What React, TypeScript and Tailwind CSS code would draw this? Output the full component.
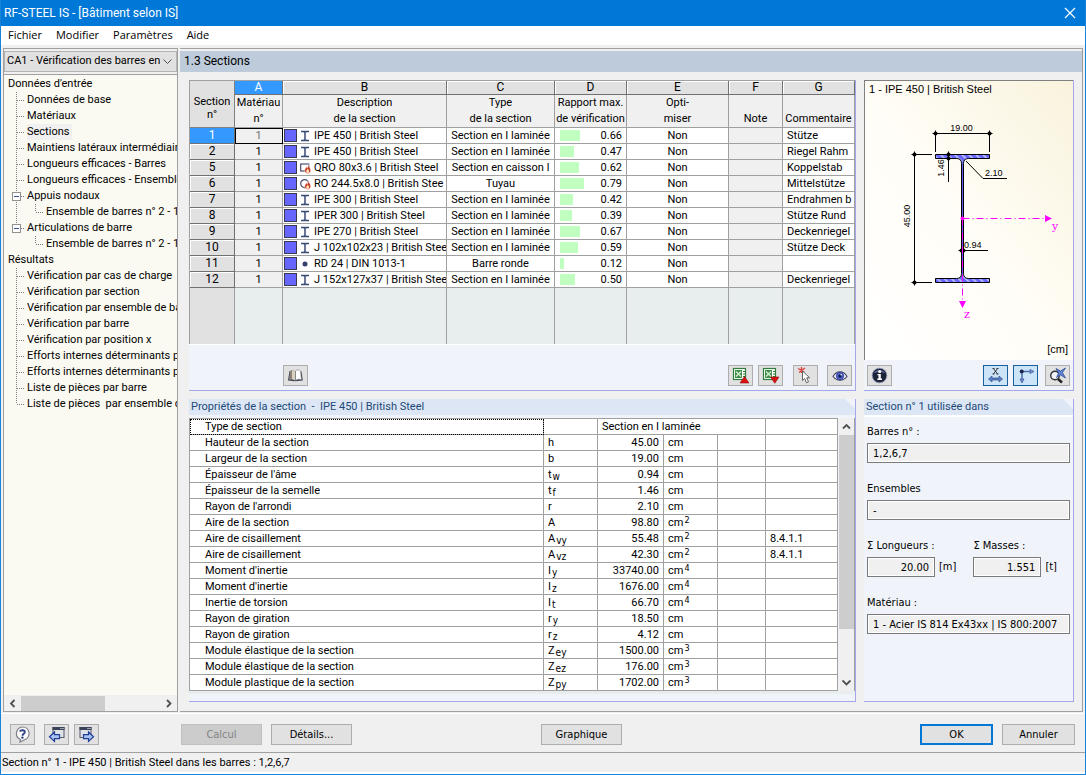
import React from "react";

const TAHOMA = "font-[Roboto,'Liberation_Sans',sans-serif]";
const ARIAL = "font-[Roboto,'Liberation_Sans',Arial,sans-serif]";
const WIDE = "font-['DejaVu_Sans_Condensed','DejaVu_Sans',sans-serif]";
const SEGOE = "font-['Open_Sans','Noto_Sans',sans-serif]";

/* ---------- data ---------- */

type Shape = "i" | "box" | "pipe" | "dot";

type SectionRow = {
  no: string;
  shape: Shape;
  name: string;
  type: string;
  ratio: number;
  comment: string;
};

const I_TYPE = "Section en I laminée";

const SECTIONS: SectionRow[] = [
  { no: "1", shape: "i", name: "IPE 450 | British Steel", type: I_TYPE, ratio: 0.66, comment: "Stütze" },
  { no: "2", shape: "i", name: "IPE 450 | British Steel", type: I_TYPE, ratio: 0.47, comment: "Riegel Rahm" },
  { no: "5", shape: "box", name: "QRO 80x3.6 | British Steel", type: "Section en caisson l", ratio: 0.62, comment: "Koppelstab" },
  { no: "6", shape: "pipe", name: "RO 244.5x8.0 | British Stee", type: "Tuyau", ratio: 0.79, comment: "Mittelstütze" },
  { no: "7", shape: "i", name: "IPE 300 | British Steel", type: I_TYPE, ratio: 0.42, comment: "Endrahmen b" },
  { no: "8", shape: "i", name: "IPER 300 | British Steel", type: I_TYPE, ratio: 0.39, comment: "Stütze Rund" },
  { no: "9", shape: "i", name: "IPE 270 | British Steel", type: I_TYPE, ratio: 0.67, comment: "Deckenriegel" },
  { no: "10", shape: "i", name: "J 102x102x23 | British Stee", type: I_TYPE, ratio: 0.59, comment: "Stütze Deck" },
  { no: "11", shape: "dot", name: "RD 24 | DIN 1013-1", type: "Barre ronde", ratio: 0.12, comment: "" },
  { no: "12", shape: "i", name: "J 152x127x37 | British Stee", type: I_TYPE, ratio: 0.5, comment: "Deckenriegel" },
];

type Property = {
  label: string;
  sym: string;
  sub?: string;
  value: string;
  exp?: string;
  clause?: string;
};

const PROPERTIES: Property[] = [
  { label: "Hauteur de la section", sym: "h", value: "45.00" },
  { label: "Largeur de la section", sym: "b", value: "19.00" },
  { label: "Épaisseur de l'âme", sym: "t", sub: "w", value: "0.94" },
  { label: "Épaisseur de la semelle", sym: "t", sub: "f", value: "1.46" },
  { label: "Rayon de l'arrondi", sym: "r", value: "2.10" },
  { label: "Aire de la section", sym: "A", value: "98.80", exp: "2" },
  { label: "Aire de cisaillement", sym: "A", sub: "vy", value: "55.48", exp: "2", clause: "8.4.1.1" },
  { label: "Aire de cisaillement", sym: "A", sub: "vz", value: "42.30", exp: "2", clause: "8.4.1.1" },
  { label: "Moment d'inertie", sym: "I", sub: "y", value: "33740.00", exp: "4" },
  { label: "Moment d'inertie", sym: "I", sub: "z", value: "1676.00", exp: "4" },
  { label: "Inertie de torsion", sym: "I", sub: "t", value: "66.70", exp: "4" },
  { label: "Rayon de giration", sym: "r", sub: "y", value: "18.50" },
  { label: "Rayon de giration", sym: "r", sub: "z", value: "4.12" },
  { label: "Module élastique de la section", sym: "Z", sub: "ey", value: "1500.00", exp: "3" },
  { label: "Module élastique de la section", sym: "Z", sub: "ez", value: "176.00", exp: "3" },
  { label: "Module plastique de la section", sym: "Z", sub: "py", value: "1702.00", exp: "3" },
];

type Node = { label: string; selected?: boolean; child?: string };

const INPUT_NODES: Node[] = [
  { label: "Données de base" },
  { label: "Matériaux" },
  { label: "Sections", selected: true },
  { label: "Maintiens latéraux intermédiaire" },
  { label: "Longueurs efficaces - Barres" },
  { label: "Longueurs efficaces - Ensemble" },
  { label: "Appuis nodaux", child: "Ensemble de barres n° 2 - 1" },
  { label: "Articulations de barre", child: "Ensemble de barres n° 2 - 1" },
];

const RESULT_NODES: Node[] = [
  { label: "Vérification par cas de charge" },
  { label: "Vérification par section" },
  { label: "Vérification par ensemble de ba" },
  { label: "Vérification par barre" },
  { label: "Vérification par position x" },
  { label: "Efforts internes déterminants p" },
  { label: "Efforts internes déterminants p" },
  { label: "Liste de pièces par barre" },
  { label: "Liste de pièces  par ensemble d" },
];

/* ---------- icons ---------- */

function ShapeIcon({ shape }: { shape: Shape }) {
  return (
    <svg width="11" height="12" viewBox="0 0 11 12" className="shrink-0">
      {shape === "i" && (
        <g stroke="#3b4a78" fill="none">
          <path d="M1 1.500h8M1 10.500h8M5 2v8" strokeWidth="1.500" />
          <path d="M3.500 2.500h3M3.500 9.500h3" strokeOpacity=".4" />
        </g>
      )}
      {shape === "dot" && <circle cx="5" cy="6" r="2.500" fill="#34406e" />}
      {shape === "box" && <rect x=".7" y="2" width="8" height="7" fill="none" stroke="#4a4f70" strokeWidth="1.200" />}
      {shape === "pipe" && <circle cx="4.700" cy="5.600" r="4" fill="none" stroke="#4a4f70" strokeWidth="1.200" />}
      {(shape === "box" || shape === "pipe") && (
        <g>
          <path d="M8 2.200c.3 2 2.700 3.300 2.700 6 0 2-1.300 3.200-3 3.200S4.700 10.300 4.700 8.500c0-1.700 1.300-2.200 1.500-3.700C7 5 7.200 5.600 7.300 6 8 5 8.100 3.600 8 2.200z" fill="#c8402a" stroke="#fff" strokeWidth=".4" />
          <path d="M7.700 6.200c.2 1.300 1.400 1.600 1.400 3.200 0 .9-.6 1.500-1.400 1.500s-1.500-.5-1.500-1.500c0-1.200 1.300-1.600 1.500-3.200z" fill="#ffe2b8" />
        </g>
      )}
    </svg>
  );
}

function BookIcon() {
  return (
    <svg width="17" height="15" viewBox="0 0 17 15">
      <path d="M2.500 3 1 12.500l7 .8 7.800-.8L14.500 3.500z" fill="#3a4054" />
      <path d="M3 3C4.500 1.500 6.500 1.500 8 3v9.500c-2-1.200-4-1.400-6-.5z" fill="#8c8478" />
      <path d="M5 2.200v9c1 0 2 .3 3 1V3C7 2.200 6 2 5 2.200z" fill="#d9d0bd" />
      <path d="M8.500 3c1.500-1.500 3.700-1.500 5 0l1 8.700c-2-.8-4-.7-6 .8z" fill="#fff" stroke="#777" strokeWidth=".6" />
    </svg>
  );
}

function ExcelIcon({ down }: { down?: boolean }) {
  return (
    <svg width="18" height="17" viewBox="0 0 18 17">
      <rect x="1.500" y="1.500" width="12" height="11" fill="#fff" stroke="#2f7d3d" strokeWidth="1.200" />
      <rect x="3" y="3" width="7" height="8" fill="#3f8c4a" />
      <path d="m4 4.500 5 5M9 4.500l-5 5" stroke="#cfeecf" strokeWidth="1.400" />
      <path d="M11 4.500h2M11 7h2M11 9.500h2" stroke="#2f7d3d" />
      {down ? (
        <path d="M8.500 10h8.500l-4.200 6.300z" fill="#dd1111" stroke="#8e0b0b" strokeWidth=".6" />
      ) : (
        <path d="M8 16h9l-4.500-6.500z" fill="#dd1111" stroke="#8e0b0b" strokeWidth=".6" />
      )}
    </svg>
  );
}

function PickIcon() {
  return (
    <svg width="17" height="17" viewBox="0 0 17 17">
      <path d="M1 1.500 7.500 5M8 1 2 5.500M4.500 0v6" stroke="#d8453f" strokeWidth="1.400" />
      <path d="M5.500 4v9.500l2.200-2 1.800 4.300 2-.9L9.700 10.800h3z" fill="#fff" stroke="#555" strokeWidth=".9" />
    </svg>
  );
}

function EyeIcon() {
  return (
    <svg width="16" height="12" viewBox="0 0 16 12">
      <path d="M1 6.500C3 3 5.500 1.700 8 1.700S13 3 15 6.500c-2 2.500-4.500 3.800-7 3.800s-5-1.300-7-3.800z" fill="#eef0fb" stroke="#3a3f63" strokeWidth="1.100" />
      <circle cx="8" cy="6" r="3.700" fill="#4d63d8" stroke="#26306f" strokeWidth=".7" />
      <circle cx="8" cy="6" r="1.600" fill="#0d1333" />
      <circle cx="9.200" cy="4.800" r=".8" fill="#fff" />
    </svg>
  );
}

function InfoIcon() {
  return (
    <svg width="17" height="17" viewBox="0 0 17 17">
      <circle cx="8.500" cy="8.500" r="7.300" fill="#1c2238" stroke="#8a92b5" strokeWidth=".8" />
      <path d="M3 6c1.500-4 9.500-4 11 0-3-1-8-1-11 0z" fill="#5a648c" />
      <circle cx="8.700" cy="4.500" r="1.500" fill="#fff" />
      <path d="M6.500 7h3.300v4.500h1.200V13H6.300v-1.500h1.200V8.300h-1z" fill="#fff" />
    </svg>
  );
}

function DimensionIcon() {
  return (
    <svg width="17" height="17" viewBox="0 0 17 17">
      <path d="m6.500 1.500 4 5.500M10.500 1.500l-4 5.500M5.500 1.500h2M9.500 1.500h2M5.500 7h2M9.500 7h2" stroke="#222" strokeWidth=".9" fill="none" />
      <path d="m1.500 12 3.500-3v2h7V9l3.500 3-3.500 3v-2H5v2z" fill="#5b7fc4" stroke="#34508d" strokeWidth=".7" />
    </svg>
  );
}

function AxesIcon() {
  return (
    <svg width="18" height="17" viewBox="0 0 18 17">
      <path d="M5 4.500h9M5 4.500v9" stroke="#4668ad" strokeWidth="1.400" />
      <circle cx="4.700" cy="4.500" r="2" fill="#16224a" />
      <path d="m13 2.500 4 2-4 2zM3 12l2 4 2-4z" fill="#7d95c8" stroke="#3c5da5" strokeWidth=".8" />
    </svg>
  );
}

function ZoomResetIcon() {
  return (
    <svg width="18" height="17" viewBox="0 0 18 17">
      <circle cx="6" cy="8.500" r="4.300" fill="#f0f3f8" stroke="#333" strokeWidth="1.400" />
      <path d="m9 12 4 3.500" stroke="#222" strokeWidth="2.600" />
      <path d="M7 1.500 11.500 4 16.500 1 13.500 5.500 16.500 11 11.500 8 7.500 10.500 9.500 6z" fill="#5f82d4" stroke="#27438f" strokeWidth=".7" />
    </svg>
  );
}

function HelpIcon() {
  return (
    <svg width="19" height="17" viewBox="0 0 19 17">
      <path d="M9.500 1a6.500 6.500 0 0 1 2 12.700L7 16l.5-2.500A6.500 6.500 0 0 1 9.500 1z" fill="#fafafa" stroke="#7f7f88" strokeWidth="1.200" />
      <path d="M7 5.700c.3-2 4.800-2 4.800.4 0 1.700-2.200 1.700-2.300 3.600" fill="none" stroke="#2f4386" strokeWidth="1.900" />
      <circle cx="9.400" cy="11.600" r="1.200" fill="#2f4386" />
    </svg>
  );
}

function PageIcon({ next }: { next?: boolean }) {
  return (
    <svg width="19" height="17" viewBox="0 0 19 17">
      <g transform={next ? "translate(-1 0)" : "translate(2 0)"}>
        <rect x="4" y="1.500" width="11" height="10" fill="#dfe2e8" stroke="#555b6b" />
        <rect x="3.500" y="1" width="12" height="3" fill="#3a4256" />
        <path d="M11.500 2.500h1M13.500 2.500h1" stroke="#fff" />
      </g>
      {next ? (
        <path d="M6.500 8.700h5V6l5 4.700-5 4.700v-2.700h-5z" fill="#a9c2f2" stroke="#1f3f95" strokeWidth="1.200" />
      ) : (
        <path d="M12.500 8.700h-5V6l-5 4.700 5 4.700v-2.700h5z" fill="#a9c2f2" stroke="#1f3f95" strokeWidth="1.200" />
      )}
    </svg>
  );
}

/* ---------- small controls ---------- */

function IconButton({ label, active, children }: { label: string; active?: boolean; children: React.ReactNode }) {
  return (
    <button
      type="button"
      aria-label={label}
      className={
        "flex h-[21px] w-[25px] items-center justify-center border " +
        (active ? "border-[#1a5f9e] bg-[#cce4f7]" : "border-[#adadad] bg-[#e1e1e1]")
      }
    >
      {children}
    </button>
  );
}

function PushButton({ label, look, wide }: { label: string; look?: "default" | "disabled"; wide?: boolean }) {
  return (
    <button
      type="button"
      disabled={look === "disabled"}
      className={
        WIDE + " h-[21px] text-[11px] leading-[17px] " +
        (wide ? "w-[81px] " : "w-[73px] ") +
        (look === "default"
          ? "border-2 border-[#0078d7] bg-[#e1e1e1]"
          : look === "disabled"
            ? "border border-[#bfbfbf] bg-[#cccccc] text-[#838383]"
            : "border border-[#adadad] bg-[#e1e1e1]")
      }
    >
      {label}
    </button>
  );
}

function Chevron({ dir, thin }: { dir: "up" | "down" | "left" | "right"; thin?: boolean }) {
  const paths = {
    up: "M1 6.500 4.500 3 8 6.500",
    down: "M.5 2.500 4.500 6.500 8.500 2.500",
    left: "M6.500 1 3 4.500 6.500 8",
    right: "M3 1 6.500 4.500 3 8",
  };
  return (
    <svg width="9" height="9" viewBox="0 0 9 9" className="shrink-0">
      <path d={paths[dir]} fill="none" stroke="#505050" strokeWidth={thin ? "1" : "1.800"} />
    </svg>
  );
}

/* ---------- navigator ---------- */

function Guide({ last, plain }: { last?: boolean; plain?: boolean }) {
  return (
    <svg width="11" height="16" viewBox="0 0 11 16" className="shrink-0">
      <path d={last ? "M.5 0v8" : "M.5 0v16"} stroke="#808080" strokeDasharray="1 1" />
      {!plain && <path d="M1 8.500h8" stroke="#808080" strokeDasharray="1 1" />}
    </svg>
  );
}

function TreeBranch({ title, nodes }: { title: string; nodes: Node[] }) {
  return (
    <li>
      <button type="button" className="block h-4 pl-1 leading-4">
        {title}
      </button>
      <ul>
        {nodes.map((node, i) => {
          const last = i === nodes.length - 1;
          return (
            <li key={i}>
              <div className="flex h-4 items-center pl-3">
                {node.child ? (
                  <span className="relative flex">
                    <Guide last={last} />
                    <button
                      type="button"
                      aria-label={"Réduire " + node.label}
                      className="absolute top-1 -left-1 flex h-[9px] w-[9px] items-center justify-center border border-[#919191] bg-white"
                    >
                      <span className="h-px w-[5px] bg-[#3b4ea0]" />
                    </button>
                  </span>
                ) : (
                  <Guide last={last} />
                )}
                <button
                  type="button"
                  className={"h-4 shrink-0 whitespace-pre leading-4 " + (node.selected ? "bg-[#f0f0f0] pr-[3px]" : "")}
                >
                  {node.label}
                </button>
              </div>
              {node.child && (
                <ul>
                  <li className="flex h-4 items-center pl-3">
                    {last ? <span className="w-[11px] shrink-0" /> : <Guide plain />}
                    <span className="w-2 shrink-0" />
                    <Guide last />
                    <button type="button" className="h-4 shrink-0 whitespace-nowrap leading-4">
                      {node.child}
                    </button>
                  </li>
                </ul>
              )}
            </li>
          );
        })}
      </ul>
    </li>
  );
}

function Navigator() {
  return (
    <aside className="flex w-[175px] shrink-0 flex-col border border-[#a0a0a0] bg-[#f0f0f0]">
      <div className="relative mt-[2px] border border-[#b4b4b4] bg-[#e1e1e1]">
        <select
          aria-label="Cas d'application"
          className="block h-[19px] w-full appearance-none pr-4 pl-[2px] text-[11px] outline-none"
        >
          <option>CA1 - Vérification des barres en</option>
        </select>
        <span className="pointer-events-none absolute top-[5px] right-1">
          <Chevron dir="down" thin />
        </span>
      </div>
      <nav className="mt-[2px] flex-1 overflow-hidden border-t border-[#a0a0a0] bg-[#fbfaf2] pt-px">
        <ul>
          <TreeBranch title="Données d'entrée" nodes={INPUT_NODES} />
          <TreeBranch title="Résultats" nodes={RESULT_NODES} />
        </ul>
      </nav>
      <div className="flex h-4 items-center justify-between bg-[#f0f0f0] px-1">
        <Chevron dir="left" />
        <span className="ml-1 h-[15px] w-[84px] bg-[#cdcdcd]" />
        <span className="flex-1" />
        <Chevron dir="right" />
      </div>
    </aside>
  );
}

/* ---------- sections table ---------- */

const COLUMNS = [
  { letter: "A", lines: ["Matériau", "n°"] },
  { letter: "B", lines: ["Description", "de la section"] },
  { letter: "C", lines: ["Type", "de la section"] },
  { letter: "D", lines: ["Rapport max.", "de vérification"] },
  { letter: "E", lines: ["Opti-", "miser"] },
  { letter: "F", lines: ["Note"] },
  { letter: "G", lines: ["Commentaire"] },
];

function SectionsTable() {
  const cell = "overflow-hidden border-r border-b border-[#a0a0a0] whitespace-nowrap ";
  return (
    <table className={ARIAL + " w-full table-fixed border-separate border-spacing-0 border-t border-l border-[#a0a0a0] text-[11px] leading-[15px]"}>
      <colgroup>
        <col className="w-[45px]" />
        <col className="w-[48px]" />
        <col className="w-[164px]" />
        <col className="w-[108px]" />
        <col className="w-[72px]" />
        <col className="w-[102px]" />
        <col className="w-[54px]" />
        <col />
      </colgroup>
      <thead>
        <tr className="h-[14px]">
          <th rowSpan={2} className="border-r border-b border-[#808080] bg-[#e1e1e1] pt-2 leading-[13px] font-normal">
            Section
            <br />
            n°
          </th>
          {COLUMNS.map((c) => (
            <th
              key={c.letter}
              className={
                "border-r border-b border-[#707070] text-[12px] leading-[13px] font-normal " +
                (c.letter === "A" ? "bg-[#3399ff] text-white" : "bg-[#e1e1e1] shadow-[inset_1px_1px_0_#ffffff]")
              }
            >
              {c.letter}
            </th>
          ))}
        </tr>
        <tr className="h-[33px]">
          {COLUMNS.map((c) => (
            <th key={c.letter} className="border-r border-b border-[#a0a0a0] bg-[#f0f0f0] align-bottom leading-4 font-normal whitespace-nowrap">
              {c.lines.map((line) => (
                <span key={line} className="block">
                  {line}
                </span>
              ))}
            </th>
          ))}
        </tr>
      </thead>
      <tbody>
        {SECTIONS.map((row, i) => (
          <tr key={row.no} className="h-4 bg-white">
            <th
              scope="row"
              className={
                "border-r border-b border-[#707070] text-[12px] font-normal " +
                (i === 0 ? "bg-[#3399ff] text-white" : "bg-[#e1e1e1] shadow-[inset_1px_1px_0_#ffffff]")
              }
            >
              {row.no}
            </th>
            <td
              className={
                cell + "bg-[#f0f0f0] text-center " + (i === 0 ? "text-[#707070] outline outline-1 -outline-offset-1 outline-black" : "")
              }
            >
              1
            </td>
            <td className={cell}>
              <div className="flex items-center gap-[3px] pl-px">
                <span className="h-[13px] w-[13px] shrink-0 border border-[#3a3a50] bg-[#6666ff]" />
                <ShapeIcon shape={row.shape} />
                <span>{row.name}</span>
              </div>
            </td>
            <td className={cell + "text-center"}>{row.type}</td>
            <td className={cell}>
              <div className="flex items-center justify-between pr-1 pl-[5px]">
                <span className="h-[11px] bg-[#c0ffc0]" style={{ width: Math.round(row.ratio * 30) }} />
                <span>{row.ratio.toFixed(2)}</span>
              </div>
            </td>
            <td className={cell + "text-center"}>Non</td>
            <td className={cell + "bg-[#f0f0f0]"} />
            <td className={cell + "pl-1"}>{row.comment}</td>
          </tr>
        ))}
        <tr className="h-14">
          <td className="border-r border-[#a0a0a0] bg-[#e1e1e1]" />
          {COLUMNS.map((c) => (
            <td key={c.letter} className="border-r border-[#a0a0a0] bg-[#e8eeee]" />
          ))}
        </tr>
      </tbody>
    </table>
  );
}

/* ---------- properties table ---------- */

function PanelHeader({ children }: { children: React.ReactNode }) {
  return (
    <h2
      className={ARIAL + " h-4 bg-[#dce6f4] pl-[2px] text-[11px] leading-4 whitespace-pre text-[#1c4a78] [clip-path:polygon(0_0,calc(100%-10px)_0,100%_10px,100%_100%,0_100%)]"}
    >
      {children}
    </h2>
  );
}

function PropertiesTable() {
  const cell = "border-r border-b border-[#a0a0a0] whitespace-nowrap ";
  return (
    <table className={ARIAL + " min-w-0 flex-1 table-fixed border-separate border-spacing-0 border-t border-l border-[#a0a0a0] bg-white text-[11px] leading-[15px]"}>
      <colgroup>
        <col />
        <col className="w-[54px]" />
        <col className="w-[66px]" />
        <col className="w-[54px]" />
        <col className="w-12" />
        <col className="w-[72px]" />
      </colgroup>
      <tbody>
        <tr className="h-4">
          <td className={cell + "pl-[15px] outline outline-1 -outline-offset-1 outline-black outline-dotted"}>Type de section</td>
          <td className={cell} />
          <td colSpan={3} className={cell + "pl-1"}>
            {I_TYPE}
          </td>
          <td className={cell} />
        </tr>
        {PROPERTIES.map((p, i) => (
          <tr key={i} className="h-4">
            <td className={cell + "pl-[15px]"}>{p.label}</td>
            <td className={cell + "pl-1"}>
              {p.sym}
              {p.sub && <sub className={WIDE + " -bottom-[2px] pl-px text-[10px]"}>{p.sub}</sub>}
            </td>
            <td className={cell + "pr-1 text-right"}>{p.value}</td>
            <td className={cell + "pl-1"}>
              cm{p.exp && <sup className={WIDE + " -top-[3px] pl-px text-[9px]"}>{p.exp}</sup>}
            </td>
            <td className={cell} />
            <td className={cell + "pl-1"}>{p.clause}</td>
          </tr>
        ))}
      </tbody>
    </table>
  );
}

/* ---------- profile drawing ---------- */

function Mark({ x, y }: { x: number; y: number }) {
  return (
    <g>
      <circle cx={x} cy={y} r="2" fill="#000" />
      <path d={`M${x - 3} ${y}h6M${x} ${y - 3}v6`} stroke="#000" />
    </g>
  );
}

function ProfileDrawing() {
  return (
    <svg width="208" height="240" viewBox="865 101 208 240" className="mx-auto block">
      <defs>
        <pattern id="hatch" width="5" height="5" patternUnits="userSpaceOnUse" patternTransform="rotate(-45)">
          <rect width="5" height="5" fill="#6666ff" />
          <rect width="1.500" height="5" fill="#c8c8ff" />
        </pattern>
      </defs>
      <path
        d="M935.500 154.500h54v4h-21q-5 0-5 5v110q0 5 5 5h21v4h-54v-4h21q5 0 5-5v-110q0-5-5-5h-21z"
        fill="url(#hatch)"
        stroke="#000"
      />
      <path d="M962.500 162v112" stroke="#5a5ae6" />
      <g stroke="#000" fill="none">
        <path d="M933 133.500h59M935.500 133v19M989.500 133v19" />
        <path d="M914.500 154v129M914 154.500h18M914 282.500h18" />
        <path d="M948.500 154v28" />
        <path d="M966 161l17 17.500h24" />
        <path d="M960 250.500h28" />
      </g>
      <Mark x={935.5} y={133.5} />
      <Mark x={989.5} y={133.5} />
      <Mark x={914.5} y={154.5} />
      <Mark x={914.5} y={282.5} />
      <Mark x={948.5} y={154.5} />
      <Mark x={948.5} y={158.5} />
      <Mark x={961.5} y={250.5} />
      <Mark x={963.5} y={250.5} />
      <g stroke="#ff00ff" fill="none">
        <path d="M962.500 218.500h84" strokeDasharray="7 3 1 3" />
        <path d="M962.500 218.500v84" strokeDasharray="7 3 1 3" />
      </g>
      <circle cx="962.500" cy="218.500" r="2" fill="#ff00ff" />
      <path d="M1045 215l7 3.500-7 3.500zM959 301h7l-3.500 7z" fill="#ff00ff" />
      <g className="font-['Liberation_Sans',Arial,sans-serif]" fontSize="9">
        <text x="961.500" y="131" textAnchor="middle">19.00</text>
        <text x="985" y="176">2.10</text>
        <text x="964" y="248">0.94</text>
        <text transform="translate(910 216) rotate(-90)" textAnchor="middle">45.00</text>
        <text transform="translate(944 168) rotate(-90)" textAnchor="middle">1.46</text>
      </g>
      <g className="font-['DejaVu_Serif',serif]" fontSize="11" fill="#ff00ff">
        <text x="1052" y="230">y</text>
        <text x="964" y="318">z</text>
      </g>
    </svg>
  );
}

/* ---------- usage panel ---------- */

function Field({ id, label, value, unit, right }: { id: string; label: string; value: string; unit?: string; right?: boolean }) {
  return (
    <div>
      <label htmlFor={id} className="block leading-4 whitespace-nowrap">
        {label}
      </label>
      <div className="mt-[3px] flex items-center gap-1">
        <input
          id={id}
          readOnly
          defaultValue={value}
          className={
            "h-5 min-w-0 border border-[#7a7a7a] bg-[#f0f0f0] px-[5px] shadow-[inset_0_0_0_1px_#ffffff] outline-none " +
            (right ? "w-[68px] text-right" : "w-full")
          }
        />
        {unit && <span>{unit}</span>}
      </div>
    </div>
  );
}

/* ---------- window ---------- */

export default function App() {
  return (
    <div className={TAHOMA + " flex min-h-screen flex-col border-x border-b border-[#1883d7] bg-[#f0f0f0] text-[11px] text-black"}>
      <header className="flex h-[26px] items-center justify-between bg-[#0078d7] pr-[9px] pl-[3px] text-[12px] text-white">
        <h1>RF-STEEL IS - [Bâtiment selon IS]</h1>
        <button type="button" aria-label="Fermer">
          <svg width="12" height="12" viewBox="0 0 12 12">
            <path d="M1 1l10 10M11 1 1 11" stroke="#fff" strokeWidth="1.200" />
          </svg>
        </button>
      </header>
      <div role="menubar" className={SEGOE + " flex h-[19px] items-center gap-[14px] bg-white pl-[7px] text-[11px]"}>
        <button type="button" role="menuitem">Fichier</button>
        <button type="button" role="menuitem">Modifier</button>
        <button type="button" role="menuitem">Paramètres</button>
        <button type="button" role="menuitem">Aide</button>
      </div>

      <div className="flex flex-1 gap-[2px] px-[2px] pt-[3px]">
        <Navigator />

        <main className="flex min-w-0 flex-1 flex-col border-t border-r border-b border-[#a0a0a0]">
          <h2 className="mt-[2px] h-[21px] bg-[#bdcbda] pl-1 text-[12px] leading-5">1.3 Sections</h2>

          <div className="grid flex-1 grid-cols-[minmax(0,1fr)_210px] grid-rows-[auto_1fr] gap-2 pt-2 pr-2 pb-[9px] pl-[9px]">
            <section className="flex flex-col border-r border-b border-[#a6a6ea] bg-[#f0f4fa]">
              <SectionsTable />
              <div className="flex flex-1 items-center border-t border-white pt-5 pr-[3px] pb-1 pl-[94px]">
                <IconButton label="Bibliothèque"><BookIcon /></IconButton>
                <span className="flex-1" />
                <div className="flex gap-[5px]">
                  <IconButton label="Exporter vers Excel"><ExcelIcon /></IconButton>
                  <IconButton label="Importer depuis Excel"><ExcelIcon down /></IconButton>
                </div>
                <div className="ml-[10px] flex gap-[9px]">
                  <IconButton label="Sélectionner"><PickIcon /></IconButton>
                  <IconButton label="Afficher"><EyeIcon /></IconButton>
                </div>
              </div>
            </section>

            <section className="flex flex-col border-r border-b border-[#a6a6ea] bg-[#f0f4fa]">
              <div className="flex h-[280px] flex-col border-t border-l border-[#808080] bg-gradient-to-tr from-white via-[#fffdf6] to-[#f9f3dd]">
                <h3 className="h-5 pl-1 font-['Liberation_Sans',Arial,sans-serif] leading-4">1 - IPE 450 | British Steel</h3>
                <ProfileDrawing />
                <p className="pr-[5px] text-right font-['Liberation_Sans',Arial,sans-serif] leading-4">[cm]</p>
              </div>
              <div className="flex h-[30px] items-center pr-[3px] pl-[3px]">
                <IconButton label="Informations"><InfoIcon /></IconButton>
                <span className="flex-1" />
                <div className="flex gap-[5px]">
                  <IconButton label="Cotes" active><DimensionIcon /></IconButton>
                  <IconButton label="Axes" active><AxesIcon /></IconButton>
                </div>
                <div className="ml-[7px]">
                  <IconButton label="Vue entière"><ZoomResetIcon /></IconButton>
                </div>
              </div>
            </section>

            <section className="flex flex-col border-r border-b border-[#a6a6ea] bg-[#f0f4fa]">
              <PanelHeader>{"Propriétés de la section  -  IPE 450 | British Steel"}</PanelHeader>
              <div className="mt-[3px] flex">
                <PropertiesTable />
                <div className="ml-px flex w-4 flex-col items-center border-r border-[#a0a0a0] bg-[#f0f0f0]">
                  <span className="flex h-[17px] items-center"><Chevron dir="up" /></span>
                  <span className="h-[194px] w-full bg-[#cdcdcd]" />
                  <span className="flex-1" />
                  <span className="flex h-[17px] items-center"><Chevron dir="down" /></span>
                </div>
              </div>
              <div className="h-[3px] bg-[#e8eeee]" />
            </section>

            <section className="border-r border-b border-[#a6a6ea] bg-[#f0f4fa]">
              <PanelHeader>Section n° 1 utilisée dans</PanelHeader>
              <div className={WIDE + " flex flex-col gap-[18px] border-t-2 border-white pt-[7px] pr-[3px] pl-[3px]"}>
                <Field id="bars" label="Barres n° :" value="1,2,6,7" />
                <Field id="sets" label="Ensembles" value="-" />
                <div className="flex gap-[17px]">
                  <Field id="lengths" label="Σ Longueurs :" value="20.00" unit="[m]" right />
                  <Field id="masses" label="Σ Masses :" value="1.551" unit="[t]" right />
                </div>
                <Field id="material" label="Matériau :" value="1 - Acier IS 814 Ex43xx | IS 800:2007" />
              </div>
            </section>
          </div>
        </main>
      </div>

      <footer>
        <div className="mt-px flex border-t border-white pt-[10px] pr-[10px] pb-[7px] pl-[9px]">
          <IconButton label="Aide"><HelpIcon /></IconButton>
          <div className="ml-[9px] flex gap-[5px]">
            <IconButton label="Précédent"><PageIcon /></IconButton>
            <IconButton label="Suivant"><PageIcon next /></IconButton>
          </div>
          <div className="ml-[82px] flex gap-[9px]">
            <PushButton label="Calcul" look="disabled" wide />
            <PushButton label="Détails..." wide />
          </div>
          <div className="ml-[189px]">
            <PushButton label="Graphique" wide />
          </div>
          <div className="ml-auto flex gap-[9px]">
            <PushButton label="OK" look="default" />
            <PushButton label="Annuler" />
          </div>
        </div>
        <p className={ARIAL + " h-[22px] border-t border-b-2 border-t-[#a0a0a0] border-b-white pl-px leading-[19px]"}>
          Section n° 1 - IPE 450 | British Steel dans les barres : 1,2,6,7
        </p>
      </footer>
    </div>
  );
}
